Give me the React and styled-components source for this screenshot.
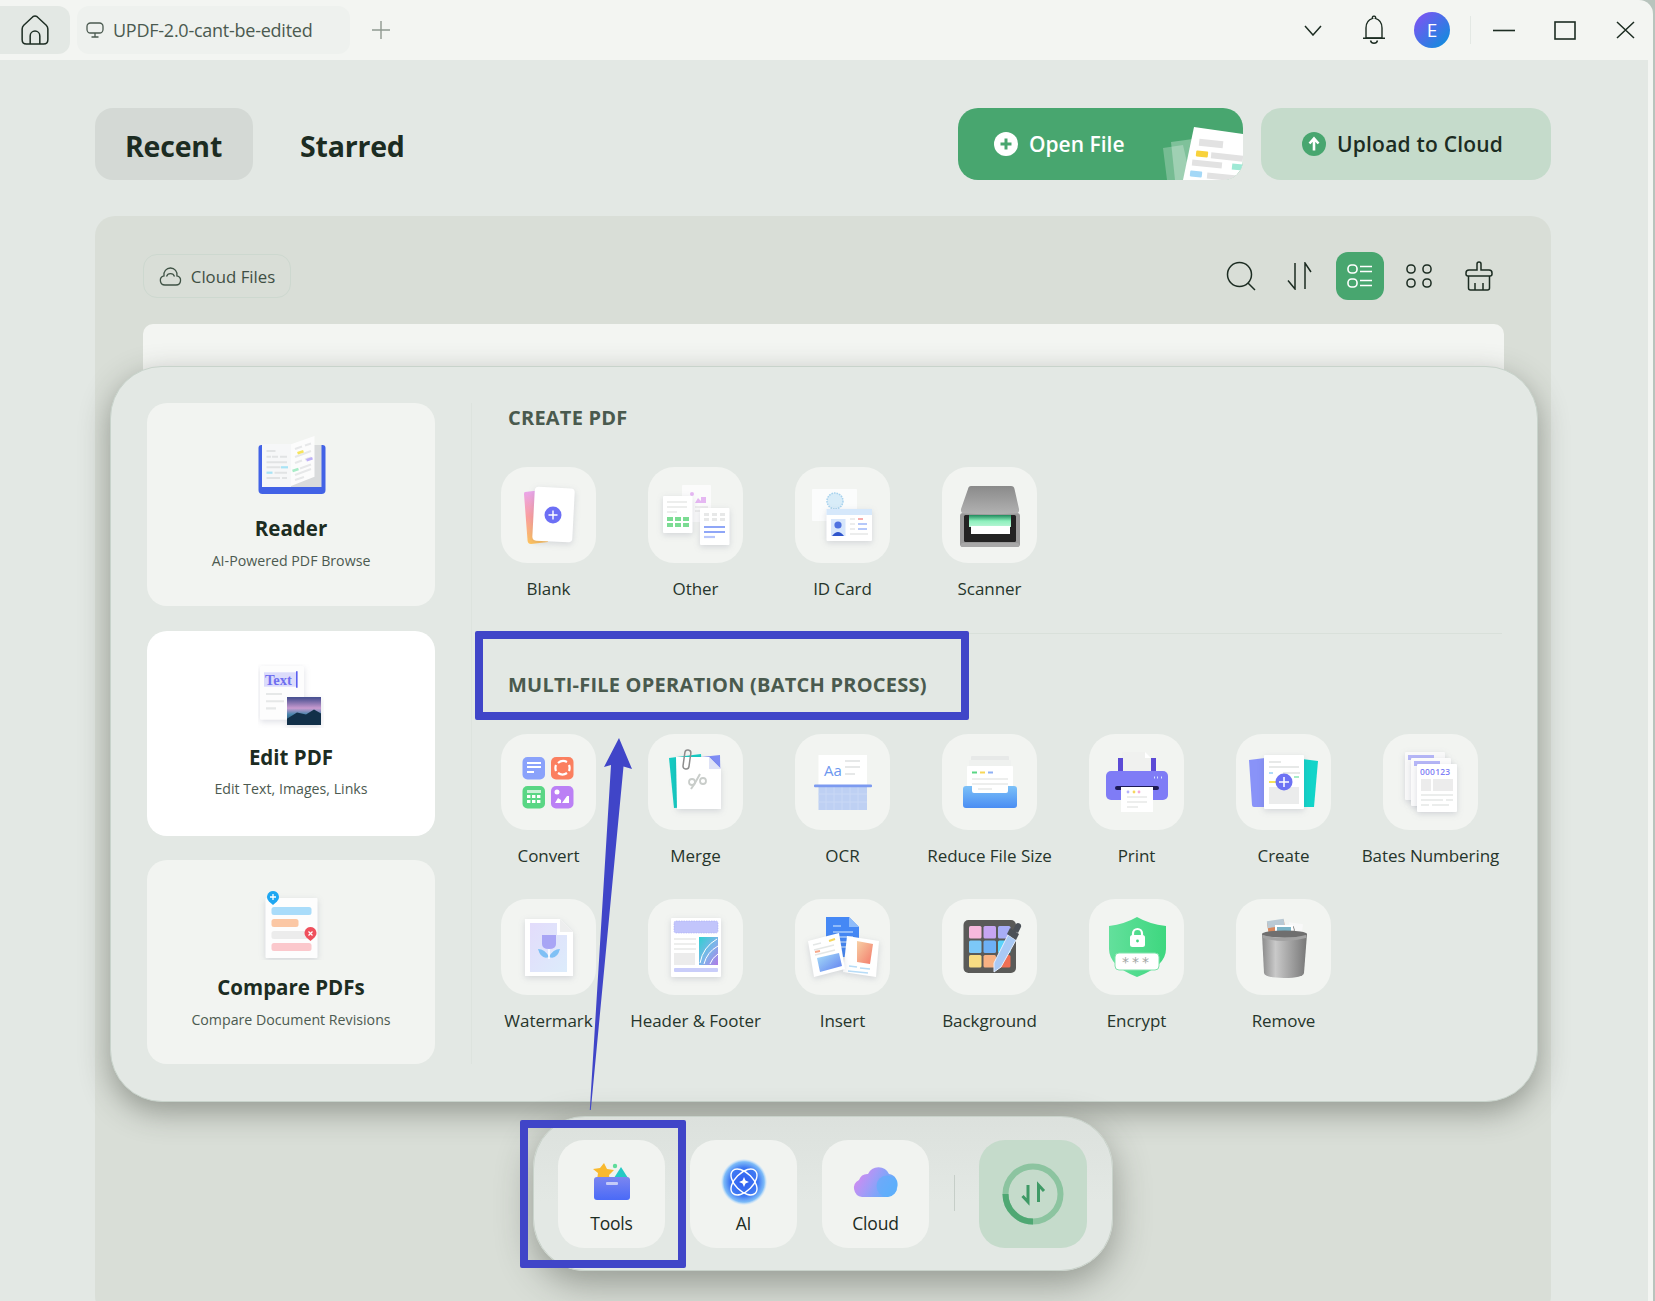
import React from "react";
import styled, { createGlobalStyle } from "styled-components";

const GlobalStyle = createGlobalStyle`
  html, body {
    margin: 0;
    padding: 0;
    background: #b8c4bd;
    font-family: "Open Sans", "Noto Sans", sans-serif;
    color: #1c2c22;
  }
  * { box-sizing: border-box; }
`;

const INK = "#1c2c22";

// page frame
const Page = styled.div`
  position: relative;
  width: 1653px;
  height: 1301px;
  overflow: hidden;
  background: #f3f5f2;
  border-top-right-radius: 14px;
`;

// title bar
const TitleBar = styled.div`
  height: 60px;
  padding-right: 5px;
  display: flex;
  align-items: center;
`;
const HomeTab = styled.div`
  width: 70px;
  height: 48px;
  background: #e3e8e4;
  border-radius: 0 12px 12px 0;
  display: flex;
  align-items: center;
  justify-content: center;
`;
const FileTab = styled.div`
  width: 273px;
  height: 48px;
  margin-left: 7px;
  padding-left: 9px;
  background: #eef1ee;
  border-radius: 12px;
  display: flex;
  align-items: center;
  gap: 9px;
  font-size: 18px;
  color: #4b5a50;
  letter-spacing: -0.25px;
`;
const NewTab = styled.div`
  margin-left: 21px;
  display: flex;
`;
const Controls = styled.div`
  margin-left: auto;
  display: flex;
  align-items: center;
  gap: 14.5px;
`;
const ControlSlot = styled.div`
  width: 46px;
  height: 46px;
  margin-right: ${(p) => (p.$tight ? "-2px" : "0")};
  display: flex;
  align-items: center;
  justify-content: center;
`;
const Avatar = styled.div`
  width: 36px;
  height: 36px;
  border-radius: 50%;
  background: linear-gradient(135deg, #7a55f2 10%, #0b8fdc 95%);
  color: #fff;
  font-size: 19px;
  display: flex;
  align-items: center;
  justify-content: center;
`;
const ControlSep = styled.div`
  width: 1px;
  height: 28px;
  margin-right: -4px;
  background: #e3e8e4;
`;

// main area
const Main = styled.div`
  width: 1648px;
  height: 1241px;
  padding: 48px 97px 0 95px;
  background: #e3e8e4;
`;
const TopRow = styled.div`
  display: flex;
  align-items: stretch;
  height: 72px;
  margin-bottom: 36px;
`;
const TabButton = styled.div`
  padding: 3px 31px 0 30px;
  margin-right: 17px;
  display: flex;
  align-items: center;
  font-size: 28.5px;
  font-weight: 700;
  letter-spacing: -0.2px;
  color: ${INK};
  border-radius: 18px;
  background: ${(p) => (p.$active ? "#d4d9d5" : "transparent")};
`;
const Actions = styled.div`
  margin-left: auto;
  display: flex;
  gap: 18.5px;
`;
const OpenFile = styled.div`
  position: relative;
  width: 284.5px;
  padding-left: 36px;
  border-radius: 20px;
  overflow: hidden;
  background: #48a66f;
  color: #fff;
  display: flex;
  align-items: center;
  gap: 11px;
  font-size: 21px;
  font-weight: 600;
`;
const PaperArt = styled.svg`
  position: absolute;
  right: 0;
  bottom: 0;
`;
const Upload = styled.div`
  width: 290px;
  padding-left: 41px;
  border-radius: 20px;
  background: #c5dbcb;
  display: flex;
  align-items: center;
  gap: 11px;
  font-size: 21px;
  font-weight: 600;
  letter-spacing: 0.2px;
  color: ${INK};
`;

// file panel behind the tools menu
const Panel = styled.div`
  height: 1100px;
  padding: 36px 47.5px 0 48px;
  background: #d9ded7;
  border-radius: 20px;
`;
const PanelBar = styled.div`
  display: flex;
  align-items: center;
  height: 48px;
  margin-bottom: 24px;
`;
const CloudFiles = styled.div`
  width: 148px;
  height: 44px;
  border: 1.5px solid #cdd8cf;
  border-radius: 14px;
  display: flex;
  align-items: center;
  justify-content: center;
  gap: 9px;
  font-size: 16.8px;
  color: #3f4f44;
`;
const ViewTools = styled.div`
  margin-left: auto;
  padding-right: 1px;
  display: flex;
  gap: 11.5px;
`;
const ViewTool = styled.div`
  width: 48px;
  height: 48px;
  border-radius: 12px;
  display: flex;
  align-items: center;
  justify-content: center;
  background: ${(p) => (p.$active ? "#48a66f" : "transparent")};
`;
const Strip = styled.div`
  height: 70px;
  background: #f3f5f2;
  border-radius: 10px 10px 0 0;
`;

// tools menu
const ToolsMenu = styled.div`
  position: absolute;
  left: 110px;
  top: 366px;
  width: 1428px;
  height: 736px;
  padding: 36px 0 0 36px;
  display: flex;
  background: #e3e8e4;
  border: 1px solid #c8d3cb;
  border-radius: 52px;
  box-shadow: 0 10px 30px rgba(50, 55, 45, 0.42);
`;
const ModeColumn = styled.div`
  width: 288px;
  display: flex;
  flex-direction: column;
  gap: 24.5px;
`;
const ModeCard = styled.div`
  height: ${(p) => p.$h}px;
  border-radius: 20px;
  background: ${(p) => (p.$active ? "#ffffff" : "#f2f4f1")};
  display: flex;
  flex-direction: column;
  align-items: center;
  padding-top: ${(p) => p.$pad}px;
`;
const ModeArt = styled.div`
  height: 72px;
  display: flex;
`;
const ModeTitle = styled.div`
  margin-top: ${(p) => p.$gap}px;
  font-size: 20.5px;
  line-height: 28px;
  font-weight: 700;
  color: ${INK};
`;
const ModeText = styled.div`
  margin-top: 8.5px;
  font-size: 14.2px;
  line-height: 20px;
  color: #4c5a50;
`;
const ToolArea = styled.div`
  margin-left: 36px;
  width: 1031px;
  height: 661px;
  padding-left: 3px;
  border-left: 1px solid #dde3de;
`;
const SectionTitle = styled.div`
  margin-left: 33px;
  margin-bottom: 34px;
  font-size: 20px;
  line-height: 30px;
  font-weight: 700;
  letter-spacing: 0.22px;
  color: #4a5a4e;
`;
const SectionRule = styled.div`
  height: 1px;
  margin: 32px 0 36px;
  background: #d9e0da;
`;
const ToolGrid = styled.div`
  display: grid;
  grid-template-columns: repeat(7, 147px);
  row-gap: 31px;
`;
const Tool = styled.div`
  display: flex;
  flex-direction: column;
  align-items: center;
`;
const ToolIcon = styled.div`
  width: 95px;
  height: 96px;
  border-radius: 26px;
  background: #f2f4f1;
  display: flex;
`;
const ToolLabel = styled.div`
  margin-top: 14px;
  font-size: 17px;
  line-height: 24px;
  color: #26352b;
  letter-spacing: -0.05px;
  white-space: nowrap;
`;

// bottom dock
const Dock = styled.div`
  position: absolute;
  left: 533px;
  top: 1116px;
  width: 580px;
  height: 155px;
  padding: 23px 0 0 24px;
  display: flex;
  background: linear-gradient(#dce1dd, #e3e8e4 55%);
  border: 1px solid #c9d3cb;
  border-radius: 52px;
  box-shadow: 0 12px 36px rgba(50, 55, 45, 0.42);
`;
const DockButton = styled.div`
  width: 107px;
  height: 108px;
  margin-right: 25px;
  border-radius: 26px;
  background: #f1f3f0;
  display: flex;
  flex-direction: column;
  align-items: center;
`;
const DockArt = styled.div`
  height: 70px;
  display: flex;
`;
const DockLabel = styled.div`
  margin-top: 1px;
  font-size: 17.5px;
  line-height: 24px;
  color: ${INK};
  letter-spacing: -0.2px;
`;
const DockSep = styled.div`
  width: 1px;
  height: 36px;
  margin: 35px 24px 0 0;
  background: #c6cec8;
`;
const SyncButton = styled.div`
  width: 108px;
  height: 108px;
  border-radius: 26px;
  background: #c5dbcb;
  display: flex;
  align-items: center;
  justify-content: center;
`;

// annotations drawn over the screenshot
const BatchMark = styled.div`
  position: absolute;
  left: 475px;
  top: 631px;
  width: 494px;
  height: 89px;
  border: 8px solid #4045c8;
  border-radius: 2px;
`;
const ToolsMark = styled.div`
  position: absolute;
  left: 520px;
  top: 1120px;
  width: 166px;
  height: 148px;
  border: 8px solid #4045c8;
  border-radius: 2px;
`;
const ArrowMark = styled.svg`
  position: absolute;
  left: 580px;
  top: 730px;
`;

// line icons
const HomeIcon = () => (
  <svg width="30" height="30" viewBox="0 0 28 28" fill="none" stroke={INK} strokeWidth="1.4">
    <path d="M2 13Q2 11 3.5 9.5L12 1.6Q14 .2 16 1.6L24.5 9.5Q26 11 26 13V23Q26 27 22 27H6Q2 27 2 23Z" />
    <path d="M9.5 27V19.5a4.5 4.5 0 0 1 9 0V27" />
  </svg>
);
const MonitorIcon = () => (
  <svg width="18" height="16" viewBox="0 0 18 16" fill="none" stroke="#4b5a50" strokeWidth="1.3">
    <rect x="1" y="1" width="16" height="10" rx="3.5" />
    <path d="M9 11v3.5M5.5 15h7" />
  </svg>
);
const PlusIcon = () => (
  <svg width="20" height="20" viewBox="0 0 20 20" stroke="#8f9991" strokeWidth="1.4">
    <path d="M10 1v18M1 10h18" />
  </svg>
);
const ChevronIcon = () => (
  <svg width="18" height="11" viewBox="0 0 18 11" fill="none" stroke={INK} strokeWidth="1.5">
    <path d="M1 1l8 9 8-9" />
  </svg>
);
const BellIcon = () => (
  <svg width="24" height="30" viewBox="0 0 24 30" fill="none" stroke={INK} strokeWidth="1.4">
    <path d="M12 1.2a1.4 1.4 0 0 1 1.4 2.2C18 4.8 20 8.5 20 13V23H4V13C4 8.5 6 4.8 10.6 3.4A1.4 1.4 0 0 1 12 1.2Z" />
    <path d="M1 23.3h22M8.5 25.5a3.6 3.6 0 0 0 7 0" />
  </svg>
);
const MinIcon = () => (
  <svg width="22" height="3" viewBox="0 0 22 3" stroke={INK} strokeWidth="1.6">
    <path d="M0 1.5h22" />
  </svg>
);
const MaxIcon = () => (
  <svg width="22" height="19" viewBox="0 0 22 19" fill="none" stroke={INK} strokeWidth="1.6">
    <rect x="1" y="1" width="20" height="17" />
  </svg>
);
const CloseIcon = () => (
  <svg width="19" height="18" viewBox="0 0 19 18" stroke={INK} strokeWidth="1.5">
    <path d="M1 1l17 16M18 1L1 17" />
  </svg>
);
const CloudLine = () => (
  <svg width="23" height="19" viewBox="0 0 23 19" fill="none" stroke="#3f5245" strokeWidth="1.3">
    <path d="M6 18a4.6 4.6 0 0 1-1-9.1A6.6 6.6 0 0 1 11.5 1a6.6 6.6 0 0 1 6.4 7.9A4.6 4.6 0 0 1 17 18Z" />
    <path d="M7.5 9.5a4.2 4.2 0 0 1 8 0" />
  </svg>
);
const SearchIcon = () => (
  <svg width="30" height="30" viewBox="0 0 30 30" fill="none" stroke={INK} strokeWidth="1.5">
    <circle cx="13.5" cy="13.5" r="12" />
    <path d="M22 22l7 7" />
  </svg>
);
const SortIcon = () => (
  <svg width="26" height="28" viewBox="0 0 26 28" fill="none" stroke={INK} strokeWidth="1.5">
    <path d="M8 1v26L1 18.5M18 27V1l6 9" />
  </svg>
);
const ListIcon = () => (
  <svg width="26" height="24" viewBox="0 0 26 24" fill="none" stroke="#fff" strokeWidth="1.6">
    <rect x="1" y="1" width="9" height="8" rx="3.5" />
    <rect x="1" y="15" width="9" height="8" rx="3.5" />
    <path d="M13 2.5h12M13 7.5h12M13 16.5h12M13 21.5h12" />
  </svg>
);
const GridIcon = () => (
  <svg width="26" height="24" viewBox="0 0 26 24" fill="none" stroke={INK} strokeWidth="1.5">
    <rect x="1" y="1" width="8" height="8" rx="3.5" />
    <rect x="17" y="1" width="8" height="8" rx="3.5" />
    <rect x="1" y="15" width="8" height="8" rx="3.5" />
    <rect x="17" y="15" width="8" height="8" rx="3.5" />
  </svg>
);
const BroomIcon = () => (
  <svg width="30" height="30" viewBox="0 0 30 30" fill="none" stroke={INK} strokeWidth="1.5">
    <path d="M15 1a2 2 0 0 1 2 2V9h8a3 3 0 0 1 3 3v1a2 2 0 0 1-2 2H4a2 2 0 0 1-2-2v-1a3 3 0 0 1 3-3h8V3a2 2 0 0 1 2-2Z" />
    <path d="M4.5 15V27a2 2 0 0 0 2 2H23.5a2 2 0 0 0 2-2V15M11 22v7M19 22v7" />
  </svg>
);
const PlusDisc = () => (
  <svg width="24" height="24" viewBox="0 0 24 24">
    <circle cx="12" cy="12" r="12" fill="#fff" />
    <path d="M12 6.5v11M6.5 12h11" stroke="#48a66f" strokeWidth="3" />
  </svg>
);
const UpDisc = () => (
  <svg width="24" height="24" viewBox="0 0 24 24">
    <circle cx="12" cy="12" r="12" fill="#48a66f" />
    <path d="M12 18.5V7M7.5 11.5L12 6.5l4.5 5" stroke="#fff" strokeWidth="2.6" fill="none" />
  </svg>
);

// illustrations
const Art = styled.svg`
  display: block;
`;
const Tile = ({ children }) => (
  <Art width="95" height="96" viewBox="0 0 95 96">
    {children}
  </Art>
);
const Soft = styled.g`
  filter: drop-shadow(0 2px 3px rgba(70, 80, 110, 0.18));
`;

const ReaderArt = () => (
  <Art width="70" height="60" viewBox="0 0 70 60">
    <path d="M2.5 13q0-3 3-3H66.5q3 0 3 3V55q0 4-4 4H6.5q-4 0-4-4Z" fill="#4262e6" />
    <rect x="35" y="10" width="30.5" height="42" fill="#d9dbdc" />
    <rect x="6" y="9" width="29" height="43" fill="#f6f7f8" />
    <path d="M35 9.3L58.5 1V41.7L35 51Z" fill="#fcfcfc" />
    <path d="M10.5 16h9M10.5 21.7h4.5M16 21.7h6M24 21.7h7M10.5 27.3h20.5M10.5 32.3h14M18.5 37.7h12.5M10.5 43h13.5M26 43h5" stroke="#e1e3e4" strokeWidth="2" />
    <path d="M25 32.3h7" stroke="#a8e3f5" strokeWidth="2.2" />
    <path d="M10.5 37.7h6" stroke="#a8e3f5" strokeWidth="2.2" />
    <path d="M39 14l7-2.5M49 10.5l6-2M39 22l16-6M39 28l7-2.5M49 24.5l6-2M44 33.5l11-4M39 40l16-6M39 45l9-3" stroke="#e7e8e9" strokeWidth="2" />
    <path d="M41.5 18.3l6-2" stroke="#f6e45c" strokeWidth="2.6" />
    <path d="M50.5 25.3l6-2" stroke="#bcaef8" strokeWidth="2.6" />
    <path d="M36.5 36l6-2" stroke="#a8ecc7" strokeWidth="2.6" />
  </Art>
);
const EditArt = () => (
  <Art width="66" height="64" viewBox="0 0 66 62" preserveAspectRatio="none">
    <defs>
      <linearGradient id="sky" x1="0" y1="0" x2="0" y2="1">
        <stop offset="0" stopColor="#3f4a8c" />
        <stop offset=".4" stopColor="#c99bd0" />
        <stop offset=".62" stopColor="#4a86ad" />
        <stop offset="1" stopColor="#16344f" />
      </linearGradient>
    </defs>
    <Soft>
      <rect x="2" y="2" width="44" height="52" rx="1" fill="#fdfdfd" />
      <rect x="29" y="32" width="34" height="27" fill="url(#sky)" />
    </Soft>
    <rect x="6" y="8" width="33" height="14" fill="#dcdcfb" />
    <text x="7" y="20" fontFamily="Liberation Serif, serif" fontWeight="700" fontSize="14.5" fill="#6f6ff0">Text</text>
    <rect x="38" y="7" width="1.6" height="16" fill="#5b5ff0" />
    <path d="M8 29h16M8 36h18M8 43h10" stroke="#e6e8e8" strokeWidth="2" />
    <path d="M29 53l10-6 9 2 8-5 7 4v11H29Z" fill="#123049" />
  </Art>
);
const CompareArt = () => (
  <Art width="66" height="72" viewBox="0 0 66 72">
    <Soft>
      <rect x="7.5" y="10" width="52" height="60" rx="1" fill="#fdfdfd" />
    </Soft>
    <rect x="13.5" y="19" width="40" height="8" rx="2.5" fill="#a9dcfa" />
    <rect x="13.5" y="31" width="27" height="8" rx="2.5" fill="#fbc7a4" />
    <rect x="13.5" y="43" width="40" height="8" rx="2.5" fill="#ececec" />
    <rect x="13.5" y="55" width="40" height="8" rx="2.5" fill="#fbc8cc" />
    <path d="M15 3a6 6 0 0 1 4 10.4L15 17l-4-3.6A6 6 0 0 1 15 3Z" fill="#1ea7f2" />
    <path d="M15 6v6M12 9h6" stroke="#fff" strokeWidth="1.3" />
    <path d="M52.5 39a6 6 0 0 1 4 10.4l-4 3.6-4-3.6A6 6 0 0 1 52.5 39Z" fill="#ef4f5c" />
    <path d="M50.5 43.5l4 4M54.5 43.5l-4 4" stroke="#fff" strokeWidth="1.2" />
  </Art>
);

const BlankArt = () => (
  <Tile>
    <defs>
      <linearGradient id="blankBack" x1="0" y1="0" x2="0" y2="1">
        <stop offset="0" stopColor="#e9a6ee" />
        <stop offset=".5" stopColor="#fb9f9f" />
        <stop offset="1" stopColor="#ffc45c" />
      </linearGradient>
    </defs>
    <path d="M24 25l17-2 6 52-17 2q-3 0-3.4-3L23 27q0-2 1-2Z" fill="url(#blankBack)" />
    <Soft>
      <rect x="32.5" y="20.5" width="40" height="54" rx="4" fill="#fff" transform="rotate(3 52 48)" />
    </Soft>
    <circle cx="52" cy="48" r="8.5" fill="#6c6ff5" />
    <path d="M52 43.5v9M47.5 48h9" stroke="#fff" strokeWidth="1.4" />
  </Tile>
);
const OtherArt = () => (
  <Tile>
    <rect x="34" y="18" width="29" height="37" rx="1" fill="#fbfbfb" />
    <circle cx="44" cy="27" r="2" fill="#e5b7f2" />
    <path d="M47 36l3-5 3 3v-4h5v6Z" fill="#e5b7f2" />
    <path d="M47 40h13M47 44h13" stroke="#e7e8e8" strokeWidth="1.6" />
    <Soft>
      <rect x="15" y="29" width="29.5" height="37" rx="1" fill="#fff" />
      <rect x="52" y="41" width="29.5" height="37" rx="1" fill="#fff" />
    </Soft>
    <path d="M19 35h20M19 40h20M19 45h10" stroke="#e8e9e8" strokeWidth="1.6" />
    <g fill="#7bdc93">
      <rect x="19" y="50" width="6" height="4" />
      <rect x="27" y="50" width="6" height="4" />
      <rect x="35" y="50" width="6" height="4" />
      <rect x="19" y="56" width="6" height="4" />
      <rect x="27" y="56" width="6" height="4" />
      <rect x="35" y="56" width="6" height="4" />
    </g>
    <g fill="#e7e8e8">
      <rect x="56" y="46" width="5" height="3" />
      <rect x="64" y="46" width="5" height="3" />
      <rect x="72" y="46" width="5" height="3" />
      <rect x="56" y="51" width="5" height="3" />
      <rect x="64" y="51" width="5" height="3" />
      <rect x="72" y="51" width="5" height="3" />
    </g>
    <path d="M56 60h21M56 65h21" stroke="#8fa6f7" strokeWidth="2.2" />
    <path d="M56 70h11" stroke="#b8c6fa" strokeWidth="2.2" />
  </Tile>
);
const IdArt = () => (
  <Tile>
    <rect x="17" y="22" width="45" height="32" rx="1" fill="#fbfcfc" />
    <circle cx="40" cy="34" r="8" fill="#d8ecf8" stroke="#a7d2ee" strokeWidth="1.5" strokeDasharray="1.6 1" />
    <Soft>
      <rect x="31.5" y="42" width="45.5" height="32" rx="1" fill="#fff" />
    </Soft>
    <rect x="31.5" y="42" width="45.5" height="6" fill="#d6e8fb" />
    <rect x="36" y="52" width="14.5" height="17" fill="#d7e6fb" />
    <circle cx="43" cy="58" r="3.6" fill="#4f72e0" />
    <path d="M37 69q6-8 12 0Z" fill="#2f55cc" />
    <path d="M55 52h5M55 57h5M55 62h5M55 67h18" stroke="#e6e8e8" strokeWidth="1.6" />
    <path d="M63 52h5" stroke="#f7a3a3" strokeWidth="1.8" />
    <path d="M63 57h9M63 62h9" stroke="#b5c8fa" strokeWidth="1.8" />
  </Tile>
);
const ScannerArt = () => (
  <Tile>
    <defs>
      <linearGradient id="lid" x1="0" y1="0" x2="0" y2="1">
        <stop offset="0" stopColor="#8a8a8a" />
        <stop offset="1" stopColor="#b2b2b2" />
      </linearGradient>
      <linearGradient id="glow" x1="0" y1="0" x2="0" y2="1">
        <stop offset="0" stopColor="#1f8a5c" />
        <stop offset=".5" stopColor="#8ef0bd" />
        <stop offset="1" stopColor="#b8f5d5" />
      </linearGradient>
    </defs>
    <rect x="18" y="46" width="60" height="34" rx="3" fill="#9a9a9a" />
    <rect x="22" y="48" width="52" height="27" rx="1.5" fill="#232323" />
    <rect x="27" y="48" width="42" height="12" fill="url(#glow)" />
    <rect x="29" y="59" width="39" height="8" fill="#fff" />
    <path d="M26 22q.5-3 3-3H69q3 0 3.5 3L77 42q.5 4-3 4.5Q48 48 22 46.5q-3.5-.5-3-4.5Z" fill="url(#lid)" />
    <rect x="19" y="76" width="58" height="4" rx="1.5" fill="#a8a8a8" />
  </Tile>
);
const ConvertArt = () => (
  <Tile>
    <rect x="21.5" y="23" width="22.5" height="22.5" rx="5" fill="#8aa2fb" />
    <path d="M26 29h14M26 33h14M26 38h7" stroke="#fff" strokeWidth="2" />
    <rect x="50" y="23" width="22.5" height="22.5" rx="5" fill="#fb7f5f" />
    <path d="M57 29a8 8 0 0 1 9-1M66 39a8 8 0 0 1-9 0M55 37a8 8 0 0 1 0-6M68 31a8 8 0 0 1 0 6" stroke="#fff" strokeWidth="2.2" fill="none" />
    <rect x="21.5" y="52" width="22.5" height="22.5" rx="5" fill="#59d684" />
    <rect x="26" y="56" width="14" height="3" fill="#c9f1d6" />
    <g fill="#fff">
      <rect x="26" y="61" width="3.4" height="3" />
      <rect x="31" y="61" width="3.4" height="3" />
      <rect x="36" y="61" width="3.4" height="3" />
      <rect x="26" y="66" width="3.4" height="3" />
      <rect x="31" y="66" width="3.4" height="3" />
      <rect x="36" y="66" width="3.4" height="3" />
    </g>
    <rect x="50" y="52" width="22.5" height="22.5" rx="5" fill="#bb80f5" />
    <circle cx="56" cy="58" r="2.5" fill="#fff" />
    <path d="M54 69l3-5 3 2v3ZM61 69l5-7 2 0v7Z" fill="#fff" />
  </Tile>
);
const MergeArt = () => (
  <Tile>
    <path d="M21 24l32-4 4 52-31 2Z" fill="#15ccc3" />
    <path d="M44 24l28-3 1 54-30-1Z" fill="#7f8df5" />
    <Soft>
      <path d="M28 23H61L73 35V75H29Z" fill="#fff" />
    </Soft>
    <path d="M61 23v12h12Z" fill="#dfe3f6" />
    <circle cx="44" cy="48" r="3" fill="none" stroke="#c9cdca" strokeWidth="1.8" />
    <circle cx="55" cy="47" r="3" fill="none" stroke="#c9cdca" strokeWidth="1.8" />
    <path d="M52 40l-5 9-4 6" stroke="#c9cdca" strokeWidth="2" fill="none" />
    <rect x="36" y="16" width="6" height="19" rx="3" fill="none" stroke="#8d8d8d" strokeWidth="1.5" transform="rotate(8 39 25)" />
  </Tile>
);
const OcrArt = () => (
  <Tile>
    <rect x="23.5" y="21" width="48.5" height="31" fill="#fff" />
    <text x="29" y="42" fontFamily="Open Sans, sans-serif" fontSize="15" fill="#6c97ef">Aa</text>
    <path d="M50 27h15M50 33h15M50 40h10" stroke="#e6e8e8" strokeWidth="1.8" />
    <rect x="23.5" y="53" width="48.5" height="23" fill="#bed0f3" />
    <path d="M31 53v23M39 53v23M47 53v23M55 53v23M63 53v23M23.5 60h48.5M23.5 68h48.5" stroke="#c9d8f5" strokeWidth="1" />
    <rect x="19" y="50.5" width="58" height="2.8" rx="1" fill="#7c9af0" />
  </Tile>
);
const ReduceArt = () => (
  <Tile>
    <defs>
      <linearGradient id="tray" x1="0" y1="0" x2="0" y2="1">
        <stop offset="0" stopColor="#7cc1f8" />
        <stop offset="1" stopColor="#4a8df3" />
      </linearGradient>
    </defs>
    <rect x="29" y="22" width="38" height="8" rx="1" fill="#e7e9e8" />
    <rect x="27" y="26" width="42" height="8" rx="1" fill="#eff1ef" />
    <rect x="25" y="32" width="46" height="28" rx="1" fill="#fff" />
    <path d="M30 38.5h5" stroke="#59d684" strokeWidth="2" />
    <path d="M38 38.5h5" stroke="#f7d757" strokeWidth="2" />
    <path d="M46 38.5h5" stroke="#8fb0f5" strokeWidth="2" />
    <path d="M30 45h36M30 50h36M36 55h14" stroke="#e7e9e8" strokeWidth="1.6" />
    <path d="M24 52H30V57q0 2 2 2H64q2 0 2-2V52H72q3 0 3 3V71q0 3-3 3H24q-3 0-3-3V55q0-3 3-3Z" fill="url(#tray)" />
  </Tile>
);
const PrintArt = () => (
  <Tile>
    <path d="M33 18H56L62 24V40H33Z" fill="#f0f1ef" />
    <path d="M56 18l6 6h-6Z" fill="#fff" />
    <rect x="29" y="24" width="5" height="14" fill="#5c4bd6" />
    <rect x="62" y="24" width="5" height="14" fill="#5c4bd6" />
    <rect x="17" y="37" width="62" height="29" rx="5" fill="#7f7cf6" />
    <rect x="26" y="52" width="44" height="4" rx="2" fill="#1d1a55" />
    <rect x="32" y="53" width="32" height="25" fill="#fff" />
    <circle cx="39" cy="58" r="1.4" fill="#b5b4f8" />
    <circle cx="45" cy="58" r="1.4" fill="#f6d65c" />
    <circle cx="50" cy="58" r="1.4" fill="#f5a7d8" />
    <path d="M38 63h20M38 68h20M38 73h11" stroke="#e7e9e8" strokeWidth="1.5" />
    <path d="M65 43.5h1M68 43.5h1M72 43.5h1" stroke="#d8e5ff" strokeWidth="2" />
  </Tile>
);
const CreateArt = () => (
  <Tile>
    <path d="M13 26l16-2V73L18 73Q16 73 16 71Z" fill="#8993f8" />
    <path d="M66 25l16 2-4 46-12 0Z" fill="#12d4c9" />
    <Soft>
      <rect x="28" y="21" width="40" height="54" rx="1" fill="#fff" />
    </Soft>
    <path d="M33 28h12M33 33h30M47 39h17" stroke="#e7e9e8" strokeWidth="2" />
    <path d="M33 39h4" stroke="#aeddf7" strokeWidth="2" />
    <path d="M33 48h8" stroke="#f6e45c" strokeWidth="2" />
    <path d="M58 43h5" stroke="#a8ecc7" strokeWidth="2" />
    <rect x="33" y="53" width="30" height="17" fill="#ebecec" />
    <circle cx="48" cy="48" r="8.5" fill="#6d72f4" />
    <path d="M48 43v10M43 48h10" stroke="#fff" strokeWidth="1.5" />
  </Tile>
);
const BatesArt = () => (
  <Tile>
    <Soft>
      <rect x="22" y="18" width="40" height="48" rx="1" fill="#f9f9f9" />
    </Soft>
    <rect x="25" y="21" width="26" height="5" fill="#b6b7f8" />
    <Soft>
      <rect x="28" y="24" width="40" height="48" rx="1" fill="#fbfbfb" />
    </Soft>
    <rect x="31" y="27" width="26" height="5" fill="#b6b7f8" />
    <Soft>
      <rect x="34" y="30" width="40" height="48" rx="1" fill="#fff" />
    </Soft>
    <text x="37" y="41" fontFamily="Open Sans, sans-serif" fontSize="8.5" fontWeight="600" letterSpacing=".2" fill="#7f7ff5">000123</text>
    <rect x="38" y="45" width="10" height="12" fill="#ececec" />
    <rect x="50" y="45" width="20" height="12" fill="#ececec" />
    <path d="M38 61h32M38 66h22M63 66h7M38 71h8M49 71h17" stroke="#e5e7e6" strokeWidth="1.6" />
  </Tile>
);
const WatermarkArt = () => (
  <Tile>
    <defs>
      <linearGradient id="wm" x1="0" y1="0" x2="1" y2="1">
        <stop offset="0" stopColor="#e3dcfb" />
        <stop offset="1" stopColor="#dcecfb" />
      </linearGradient>
    </defs>
    <Soft>
      <path d="M24 20H59L72 33V77H24Z" fill="#fff" />
    </Soft>
    <path d="M29 24H56V36H66V73H29Z" fill="url(#wm)" />
    <path d="M59 20v13h13Z" fill="#edeeee" />
    <path d="M41 36h14V45q0 5-7 5t-7-5Z" fill="#a8a5f5" />
    <path d="M37 50q7 0 11 8-8 3-11-8ZM59 50q-7 0-11 8 8 3 11-8Z" fill="#7fc0f5" />
    <path d="M48 50v10" stroke="#fff" strokeWidth="1.5" />
  </Tile>
);
const HeaderArt = () => (
  <Tile>
    <defs>
      <linearGradient id="fan" x1="0" y1="0" x2="1" y2="1">
        <stop offset="0" stopColor="#2fd0d0" />
        <stop offset=".55" stopColor="#7fb4ea" />
        <stop offset="1" stopColor="#b07ae6" />
      </linearGradient>
    </defs>
    <Soft>
      <rect x="23" y="19" width="50" height="59" rx="1" fill="#fff" />
    </Soft>
    <rect x="26" y="22" width="44" height="12" rx="2" fill="#c2c5fb" stroke="#a9adf5" strokeWidth=".6" strokeDasharray="1.5 1" />
    <rect x="51" y="38" width="19" height="28" fill="url(#fan)" />
    <path d="M52 64q3-16 17-24M56 65q3-12 14-18M62 65q2-6 8-10" stroke="#fff" strokeWidth="1" fill="none" />
    <path d="M26 40h22M26 45h22M26 50h22" stroke="#e7e9e8" strokeWidth="1.5" />
    <rect x="26" y="54" width="21" height="12" fill="#ececec" />
    <rect x="26" y="69" width="44" height="4" rx="1" fill="#c9cdfa" />
  </Tile>
);
const InsertArt = () => (
  <Tile>
    <defs>
      <linearGradient id="ins" x1="0" y1="0" x2="1" y2="1">
        <stop offset="0" stopColor="#f7d0a5" />
        <stop offset="1" stopColor="#f37a6a" />
      </linearGradient>
      <linearGradient id="ins2" x1="0" y1="0" x2="1" y2="1">
        <stop offset="0" stopColor="#a9e0f8" />
        <stop offset="1" stopColor="#5f7df0" />
      </linearGradient>
    </defs>
    <path d="M31 18H54L64 28V58H31Z" fill="#4588f5" />
    <path d="M54 18l10 10H54Z" fill="#8fbcfa" />
    <path d="M38 27h8M38 33h20M38 38h20M38 43h20M38 48h20" stroke="#a9cbfb" strokeWidth="1.5" />
    <Soft>
      <path d="M52 37l32 5-3 36-33-5Z" fill="#fff" />
    </Soft>
    <path d="M62 42l16 3-3 20-13-2Z" fill="url(#ins)" />
    <path d="M54 67l8 1M65 69l10 1M53 72l20 2" stroke="#b7dcf7" strokeWidth="1.5" />
    <Soft>
      <path d="M13 42l31-8 6 36-31 8Z" fill="#fff" />
    </Soft>
    <path d="M18 46l8-2M19 51l20-5M20 56l20-5" stroke="#e4e7e6" strokeWidth="1.5" />
    <path d="M34 42l6-2" stroke="#f6d65c" strokeWidth="2" />
    <path d="M20 53l5-1" stroke="#f7a88a" strokeWidth="2" />
    <path d="M22 59l22-5 3 13-22 6Z" fill="url(#ins2)" />
  </Tile>
);
const BackgroundArt = () => {
  const cells = ["#f7b9dd", "#c7a6f3", "#a7adf7", "#7cc8f8", "#6db0f5", "#5bd3fb", "#f7dc83", "#f7b183", "#ef6f55"];
  return (
    <Tile>
      <rect x="21.5" y="21" width="52.5" height="53" rx="5" fill="#5a5a58" />
      {cells.map((c, i) => (
        <rect key={c} x={27 + (i % 3) * 14.5} y={27 + Math.floor(i / 3) * 14.5} width="12.5" height="12.5" rx="1.5" fill={c} />
      ))}
      <path d="M66 36l8 5-15 27-7 5 0-9Z" fill="#a9c9f5" stroke="#e7eefc" strokeWidth="1" />
      <path d="M68 29l9 6-3 6-9-6Z" fill="#4c5158" />
      <path d="M74 25a3 3 0 0 1 5 3l-3 6-5-3Z" fill="#4c5158" />
    </Tile>
  );
};
const EncryptArt = () => (
  <Tile>
    <defs>
      <linearGradient id="shield" x1="0" y1="0" x2="1" y2="0">
        <stop offset="0" stopColor="#63e09c" />
        <stop offset="1" stopColor="#3ed77f" />
      </linearGradient>
    </defs>
    <path d="M48 18Q60 25 77 27V50Q77 67 48 78 20 67 20 50V27Q36 25 48 18Z" fill="url(#shield)" />
    <rect x="41" y="36" width="15" height="12" rx="2.5" fill="#fff" />
    <path d="M44 36.5v-2a4.5 4.5 0 0 1 9 0v2" stroke="#fff" strokeWidth="2.2" fill="none" />
    <circle cx="48.5" cy="42" r="1.4" fill="#3ed77f" />
    <rect x="26" y="54" width="44" height="17" rx="4" fill="#fff" stroke="#7fe3ab" strokeWidth="1" />
    <text x="48" y="68" textAnchor="middle" fontFamily="DejaVu Sans, sans-serif" fontSize="14" letterSpacing="3" fill="#a3a6a4">***</text>
  </Tile>
);
const RemoveArt = () => (
  <Tile>
    <defs>
      <linearGradient id="bin" x1="0" y1="0" x2="1" y2="0">
        <stop offset="0" stopColor="#8b8b8b" />
        <stop offset=".3" stopColor="#c9c9c9" />
        <stop offset="1" stopColor="#777" />
      </linearGradient>
    </defs>
    <rect x="32" y="22" width="17" height="18" fill="#d8875c" transform="rotate(-8 40 30)" />
    <rect x="32" y="21" width="17" height="7" fill="#b9c9d4" transform="rotate(-8 40 30)" />
    <rect x="52" y="24" width="14" height="18" fill="#f8f8f8" transform="rotate(8 58 32)" />
    <path d="M57 27q3 4 0 8t2 5" stroke="#777" strokeWidth=".8" fill="none" />
    <rect x="39" y="26" width="18" height="18" fill="#fff" />
    <rect x="41" y="28" width="14" height="14" fill="#7bb3c6" />
    <path d="M41 42v-5l5-3 4 3 5-2v7Z" fill="#2a5568" />
    <path d="M26 35H71L68 74Q67 79 48 79 29 79 28 74Z" fill="url(#bin)" />
    <ellipse cx="48.5" cy="35" rx="22.5" ry="3.5" fill="#6f6f6f" />
    <path d="M27 36Q48 42 70 36L70 39Q48 45 27 39Z" fill="#a3a3a3" />
  </Tile>
);

// dock art
const ToolsArt = () => (
  <Art width="107" height="70" viewBox="0 0 107 70">
    <defs>
      <linearGradient id="box" x1="0" y1="0" x2="0" y2="1">
        <stop offset="0" stopColor="#7b86f0" />
        <stop offset="1" stopColor="#4a6af7" />
      </linearGradient>
    </defs>
    <path d="M46 23l3 6 7 1-5 5 1 6-6-3-7 2 1-7-5-4 7-1Z" fill="#f9b92e" />
    <path d="M63 27l7 11H56Z" fill="#25c9c4" />
    <circle cx="57" cy="26" r="2.2" fill="#5edc9a" />
    <rect x="36" y="37" width="36" height="23" rx="3" fill="url(#box)" />
    <rect x="48" y="42" width="12" height="3" rx="1" fill="#c5cbf8" />
  </Art>
);
const AiArt = () => (
  <Art width="107" height="70" viewBox="0 0 107 70">
    <defs>
      <radialGradient id="orb" cx=".5" cy=".5" r=".5">
        <stop offset="0" stopColor="#2f5cf0" />
        <stop offset=".62" stopColor="#3f79f3" />
        <stop offset=".88" stopColor="#7ebcf8" />
        <stop offset="1" stopColor="#d2e7fb" stopOpacity=".3" />
      </radialGradient>
    </defs>
    <circle cx="54" cy="42" r="23" fill="url(#orb)" />
    <g fill="none" stroke="#fff" strokeWidth="1.4">
      <ellipse cx="54" cy="42" rx="16" ry="9" transform="rotate(45 54 42)" />
      <ellipse cx="54" cy="42" rx="16" ry="9" transform="rotate(-45 54 42)" />
    </g>
    <path d="M54 37l1.5 3.5L59 42l-3.5 1.5L54 47l-1.5-3.5L49 42l3.5-1.5Z" fill="#fff" />
  </Art>
);
const CloudArt = () => (
  <Art width="107" height="70" viewBox="0 0 107 70">
    <defs>
      <linearGradient id="cloud" x1="0" y1="0" x2="1" y2=".4">
        <stop offset="0" stopColor="#e384ee" />
        <stop offset=".5" stopColor="#a39bf7" />
        <stop offset="1" stopColor="#5daffb" />
      </linearGradient>
    </defs>
    <path d="M40 57a9 9 0 0 1-3-17 9 9 0 0 1 9-6 11.5 11.5 0 0 1 21 0 10 10 0 0 1 8 13 10 10 0 0 1-9 10Z" fill="url(#cloud)" />
    <circle cx="65" cy="46" r="10.5" fill="#60aefb" opacity=".7" />
  </Art>
);
const SyncArt = () => (
  <svg width="62" height="62" viewBox="0 0 62 62" fill="none">
    <circle cx="31" cy="31" r="27.5" stroke="#8cc4a0" strokeWidth="6" />
    <path d="M3.5 31A27.5 27.5 0 0 0 31 58.5" stroke="#4fa873" strokeWidth="6" />
    <path d="M26 22V39L20.5 33M36.5 39V22L42 28" stroke="#3f9a66" strokeWidth="3" />
  </svg>
);

const createTools = [
  { label: "Blank", art: <BlankArt /> },
  { label: "Other", art: <OtherArt /> },
  { label: "ID Card", art: <IdArt /> },
  { label: "Scanner", art: <ScannerArt /> },
];
const batchTools = [
  { label: "Convert", art: <ConvertArt /> },
  { label: "Merge", art: <MergeArt /> },
  { label: "OCR", art: <OcrArt /> },
  { label: "Reduce File Size", art: <ReduceArt /> },
  { label: "Print", art: <PrintArt /> },
  { label: "Create", art: <CreateArt /> },
  { label: "Bates Numbering", art: <BatesArt /> },
  { label: "Watermark", art: <WatermarkArt /> },
  { label: "Header & Footer", art: <HeaderArt /> },
  { label: "Insert", art: <InsertArt /> },
  { label: "Background", art: <BackgroundArt /> },
  { label: "Encrypt", art: <EncryptArt /> },
  { label: "Remove", art: <RemoveArt /> },
];

const ToolList = ({ tools }) => (
  <ToolGrid>
    {tools.map((t) => (
      <Tool key={t.label}>
        <ToolIcon>{t.art}</ToolIcon>
        <ToolLabel>{t.label}</ToolLabel>
      </Tool>
    ))}
  </ToolGrid>
);

const App = () => {
  return (
    <>
      <GlobalStyle />
      <Page>
        <TitleBar>
          <HomeTab>
            <HomeIcon />
          </HomeTab>
          <FileTab>
            <MonitorIcon />
            UPDF-2.0-cant-be-edited
          </FileTab>
          <NewTab>
            <PlusIcon />
          </NewTab>
          <Controls>
            <ControlSlot>
              <ChevronIcon />
            </ControlSlot>
            <ControlSlot $tight>
              <BellIcon />
            </ControlSlot>
            <ControlSlot>
              <Avatar>E</Avatar>
            </ControlSlot>
            <ControlSep />
            <ControlSlot>
              <MinIcon />
            </ControlSlot>
            <ControlSlot>
              <MaxIcon />
            </ControlSlot>
            <ControlSlot>
              <CloseIcon />
            </ControlSlot>
          </Controls>
        </TitleBar>

        <Main>
          <TopRow>
            <TabButton $active>Recent</TabButton>
            <TabButton>Starred</TabButton>
            <Actions>
              <OpenFile>
                <PlusDisc />
                Open File
                <PaperArt width="80" height="54" viewBox="0 0 80 54">
                  <path d="M0 22l20-3 8 35H4Z" fill="#fff" opacity=".25" />
                  <path d="M8 16l22-3 6 41H12Z" fill="#fff" opacity=".3" />
                  <path d="M31 1l49 7v46H20Z" fill="#fff" />
                  <rect x="36" y="14" width="24" height="7" fill="#e2e2e2" transform="rotate(6 48 18)" />
                  <rect x="33" y="25" width="12" height="6" rx="1" fill="#f8d23c" transform="rotate(6 39 28)" />
                  <rect x="48" y="28" width="32" height="6" fill="#e2e2e2" transform="rotate(6 64 31)" />
                  <rect x="29" y="35" width="30" height="6" fill="#e2e2e2" transform="rotate(6 44 38)" />
                  <rect x="69" y="38" width="11" height="6" fill="#9ee9d5" transform="rotate(6 74 41)" />
                  <rect x="27" y="45" width="12" height="6" rx="1" fill="#a4d8f7" transform="rotate(6 33 48)" />
                  <rect x="44" y="48" width="30" height="6" fill="#e2e2e2" transform="rotate(6 59 51)" />
                </PaperArt>
              </OpenFile>
              <Upload>
                <UpDisc />
                Upload to Cloud
              </Upload>
            </Actions>
          </TopRow>

          <Panel>
            <PanelBar>
              <CloudFiles>
                <CloudLine />
                Cloud Files
              </CloudFiles>
              <ViewTools>
                <ViewTool>
                  <SearchIcon />
                </ViewTool>
                <ViewTool>
                  <SortIcon />
                </ViewTool>
                <ViewTool $active>
                  <ListIcon />
                </ViewTool>
                <ViewTool>
                  <GridIcon />
                </ViewTool>
                <ViewTool>
                  <BroomIcon />
                </ViewTool>
              </ViewTools>
            </PanelBar>
            <Strip />
          </Panel>
        </Main>

        <ToolsMenu>
          <ModeColumn>
            <ModeCard $h={203} $pad={32}>
              <ModeArt>
                <ReaderArt />
              </ModeArt>
              <ModeTitle $gap={7}>Reader</ModeTitle>
              <ModeText>AI-Powered PDF Browse</ModeText>
            </ModeCard>
            <ModeCard $h={205} $active $pad={33}>
              <ModeArt>
                <EditArt />
              </ModeArt>
              <ModeTitle $gap={7}>Edit PDF</ModeTitle>
              <ModeText>Edit Text, Images, Links</ModeText>
            </ModeCard>
            <ModeCard $h={204} $pad={28}>
              <ModeArt>
                <CompareArt />
              </ModeArt>
              <ModeTitle $gap={13}>Compare PDFs</ModeTitle>
              <ModeText>Compare Document Revisions</ModeText>
            </ModeCard>
          </ModeColumn>
          <ToolArea>
            <SectionTitle>CREATE PDF</SectionTitle>
            <ToolList tools={createTools} />
            <SectionRule />
            <SectionTitle>MULTI-FILE OPERATION (BATCH PROCESS)</SectionTitle>
            <ToolList tools={batchTools} />
          </ToolArea>
        </ToolsMenu>

        <Dock>
          <DockButton>
            <DockArt>
              <ToolsArt />
            </DockArt>
            <DockLabel>Tools</DockLabel>
          </DockButton>
          <DockButton>
            <DockArt>
              <AiArt />
            </DockArt>
            <DockLabel>AI</DockLabel>
          </DockButton>
          <DockButton>
            <DockArt>
              <CloudArt />
            </DockArt>
            <DockLabel>Cloud</DockLabel>
          </DockButton>
          <DockSep />
          <SyncButton>
            <SyncArt />
          </SyncButton>
        </Dock>

        <BatchMark />
        <ToolsMark />
        <ArrowMark width="60" height="390" viewBox="580 730 60 390">
          <path d="M619 738L632 769 623.5 766.5 590.8 1110 589.8 1110 611 765 604 767Z" fill="#4045c8" />
        </ArrowMark>
      </Page>
    </>
  );
};

export default App;
